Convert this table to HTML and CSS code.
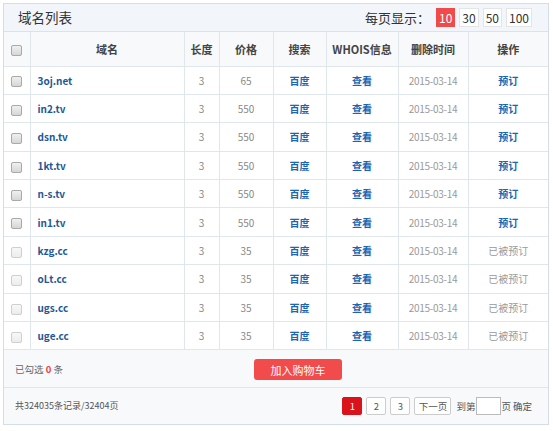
FILE: index.html
```html
<!DOCTYPE html>
<html lang="zh-CN">
<head>
<meta charset="utf-8">
<title>域名列表</title>
<link rel="stylesheet" href="styles.css">
</head>
<body>
<div class="panel">
  <div class="titlebar">
    <div class="title">域名列表</div>
    <div class="perpage">
      <span class="perpage-label">每页显示：</span>
      <span class="size active">10</span>
      <span class="size">30</span>
      <span class="size">50</span>
      <span class="size">100</span>
    </div>
  </div>
  <table class="grid">
    <colgroup>
      <col class="c-cb"><col class="c-name"><col class="c-len"><col class="c-price"><col class="c-search"><col class="c-whois"><col class="c-date"><col class="c-op">
    </colgroup>
    <thead>
      <tr>
        <th><span class="cb"></span></th>
        <th>域名</th>
        <th>长度</th>
        <th>价格</th>
        <th>搜索</th>
        <th class="whois">WHOIS信息</th>
        <th>删除时间</th>
        <th>操作</th>
      </tr>
    </thead>
    <tbody>
      <tr><td><span class="cb"></span></td><td class="name">3oj.net</td><td class="num">3</td><td class="num">65</td><td class="link">百度</td><td class="link">查看</td><td class="date">2015-03-14</td><td class="link">预订</td></tr>
      <tr><td><span class="cb"></span></td><td class="name">in2.tv</td><td class="num">3</td><td class="num">550</td><td class="link">百度</td><td class="link">查看</td><td class="date">2015-03-14</td><td class="link">预订</td></tr>
      <tr><td><span class="cb"></span></td><td class="name">dsn.tv</td><td class="num">3</td><td class="num">550</td><td class="link">百度</td><td class="link">查看</td><td class="date">2015-03-14</td><td class="link">预订</td></tr>
      <tr><td><span class="cb"></span></td><td class="name">1kt.tv</td><td class="num">3</td><td class="num">550</td><td class="link">百度</td><td class="link">查看</td><td class="date">2015-03-14</td><td class="link">预订</td></tr>
      <tr><td><span class="cb"></span></td><td class="name">n-s.tv</td><td class="num">3</td><td class="num">550</td><td class="link">百度</td><td class="link">查看</td><td class="date">2015-03-14</td><td class="link">预订</td></tr>
      <tr><td><span class="cb"></span></td><td class="name">in1.tv</td><td class="num">3</td><td class="num">550</td><td class="link">百度</td><td class="link">查看</td><td class="date">2015-03-14</td><td class="link">预订</td></tr>
      <tr><td><span class="cb off"></span></td><td class="name">kzg.cc</td><td class="num">3</td><td class="num">35</td><td class="link">百度</td><td class="link">查看</td><td class="date">2015-03-14</td><td class="taken">已被预订</td></tr>
      <tr><td><span class="cb off"></span></td><td class="name">oLt.cc</td><td class="num">3</td><td class="num">35</td><td class="link">百度</td><td class="link">查看</td><td class="date">2015-03-14</td><td class="taken">已被预订</td></tr>
      <tr><td><span class="cb off"></span></td><td class="name">ugs.cc</td><td class="num">3</td><td class="num">35</td><td class="link">百度</td><td class="link">查看</td><td class="date">2015-03-14</td><td class="taken">已被预订</td></tr>
      <tr><td><span class="cb off"></span></td><td class="name">uge.cc</td><td class="num">3</td><td class="num">35</td><td class="link">百度</td><td class="link">查看</td><td class="date">2015-03-14</td><td class="taken">已被预订</td></tr>
    </tbody>
  </table>
  <div class="selbar">
    <div class="selected">已勾选 <span class="count">0</span> 条</div>
    <button class="cart">加入购物车</button>
  </div>
  <div class="pager">
    <div class="total">共324035条记录/32404页</div>
    <div class="pages">
      <span class="pg active">1</span>
      <span class="pg">2</span>
      <span class="pg">3</span>
      <span class="pg next">下一页</span>
      <span class="goto">到第</span>
      <span class="pinput"></span>
      <span class="ye">页</span>
      <span class="ok">确定</span>
    </div>
  </div>
</div>
</body>
</html>
```
FILE: styles.css
```css
html, body {
  margin: 0;
  padding: 0;
  background: #fff;
}
body {
  font-family: "Noto Sans CJK SC", "Liberation Sans", sans-serif;
  color: #333;
}
.panel {
  margin: 3px;
  width: 546px;
  box-sizing: border-box;
  border: 1px solid #d5dee6;
  background: #fff;
}
.titlebar {
  height: 27px;
  background: #f2f6fa;
  border-bottom: 1px solid #dbe3ea;
  display: flex;
  align-items: center;
  justify-content: space-between;
  padding: 0 16px 0 14px;
}
.title {
  font-size: 13.5px;
  color: #333;
  line-height: 1;
}
.perpage {
  display: flex;
  align-items: center;
}
.perpage-label {
  font-size: 13px;
  color: #333;
  margin-right: 2px;
  line-height: 1;
}
.size {
  height: 19px;
  min-width: 19px;
  padding: 0 2px;
  box-sizing: border-box;
  margin-left: 4px;
  border: 1px solid #e4e4e4;
  background: #fff;
  font-size: 12px;
  line-height: 17px;
  text-align: center;
  color: #333;
}
.size.active {
  background: #f04a4a;
  border-color: #f04a4a;
  color: #fff;
}
.grid {
  width: 100%;
  border-collapse: collapse;
  table-layout: fixed;
}
.c-cb { width: 26px; }
.c-name { width: 154px; }
.c-len { width: 35px; }
.c-price { width: 54px; }
.c-search { width: 53px; }
.c-whois { width: 72px; }
.c-date { width: 70px; }
.c-op { width: 80px; }
.grid th, .grid td {
  border: 1px solid #dfe6ec;
  padding: 0;
  text-align: center;
  white-space: nowrap;
  overflow: hidden;
}
.grid tr > :first-child { border-left: 0; }
.grid tr > :last-child { border-right: 0; }
.grid thead tr:first-child th { border-top: 0; }
.grid thead tr {
  height: 34px;
}
.grid th {
  background: #f7f9fb;
  font-size: 11px;
  font-weight: bold;
  color: #444;
}
.grid tbody tr {
  height: 28.4px;
}
.grid td {
  font-size: 10px;
}
.cb {
  display: inline-block;
  width: 9px;
  height: 9px;
  border: 1px solid #a9a9a9;
  border-radius: 2px;
  background: linear-gradient(#f0f0f0, #d6d6d6);
  vertical-align: middle;
}
.cb.off {
  border-color: #cfcfcf;
  background: linear-gradient(#f8f8f8, #ececec);
}
.grid td.name {
  text-align: left;
  padding-left: 7px;
  font-weight: bold;
  color: #235896;
  font-size: 10px;
}
.grid td.num {
  color: #888;
}
.grid td.link {
  color: #1a66b0;
  font-weight: bold;
}
.grid td.date {
  color: #999;
  font-size: 10px;
  letter-spacing: -0.3px;
}
.grid td.taken {
  color: #999;
}
.selbar {
  height: 37px;
  background: #f7f9fb;
  border-bottom: 1px solid #dfe6ec;
  display: flex;
  align-items: center;
}
.selected {
  width: 250px;
  padding-left: 11px;
  box-sizing: border-box;
  font-size: 9.5px;
  color: #666;
}
.count {
  color: #f03c3c;
  font-weight: bold;
}
.cart {
  width: 88px;
  height: 21px;
  border: 0;
  border-radius: 3px;
  background: #f24b4b;
  color: #fff;
  font-family: inherit;
  font-size: 11px;
  padding: 0;
  margin-top: 2px;
}
.pager {
  height: 36px;
  background: #f7f9fb;
  display: flex;
  align-items: center;
  justify-content: space-between;
  padding: 0 16px 0 11px;
}
.total {
  font-size: 9px;
  color: #555;
  margin-top: -2px;
}
.pages {
  display: flex;
  align-items: center;
  font-size: 9.5px;
  color: #555;
}
.pg {
  height: 18px;
  min-width: 20px;
  box-sizing: border-box;
  padding: 0 4px;
  margin-left: 4px;
  border: 1px solid #ccc;
  border-radius: 2px;
  background: #fff;
  line-height: 16px;
  text-align: center;
  color: #555;
}
.pg.active {
  background: #d9121b;
  border-color: #d9121b;
  color: #fff;
}
.pg.next {
  width: 37px;
  padding: 0;
}
.goto {
  margin-left: 5px;
}
.pinput {
  width: 25px;
  height: 18px;
  box-sizing: border-box;
  border: 1px solid #bbb;
  background: #fff;
  margin-left: 1px;
}
.ok {
  margin-left: 2px;
}
```
